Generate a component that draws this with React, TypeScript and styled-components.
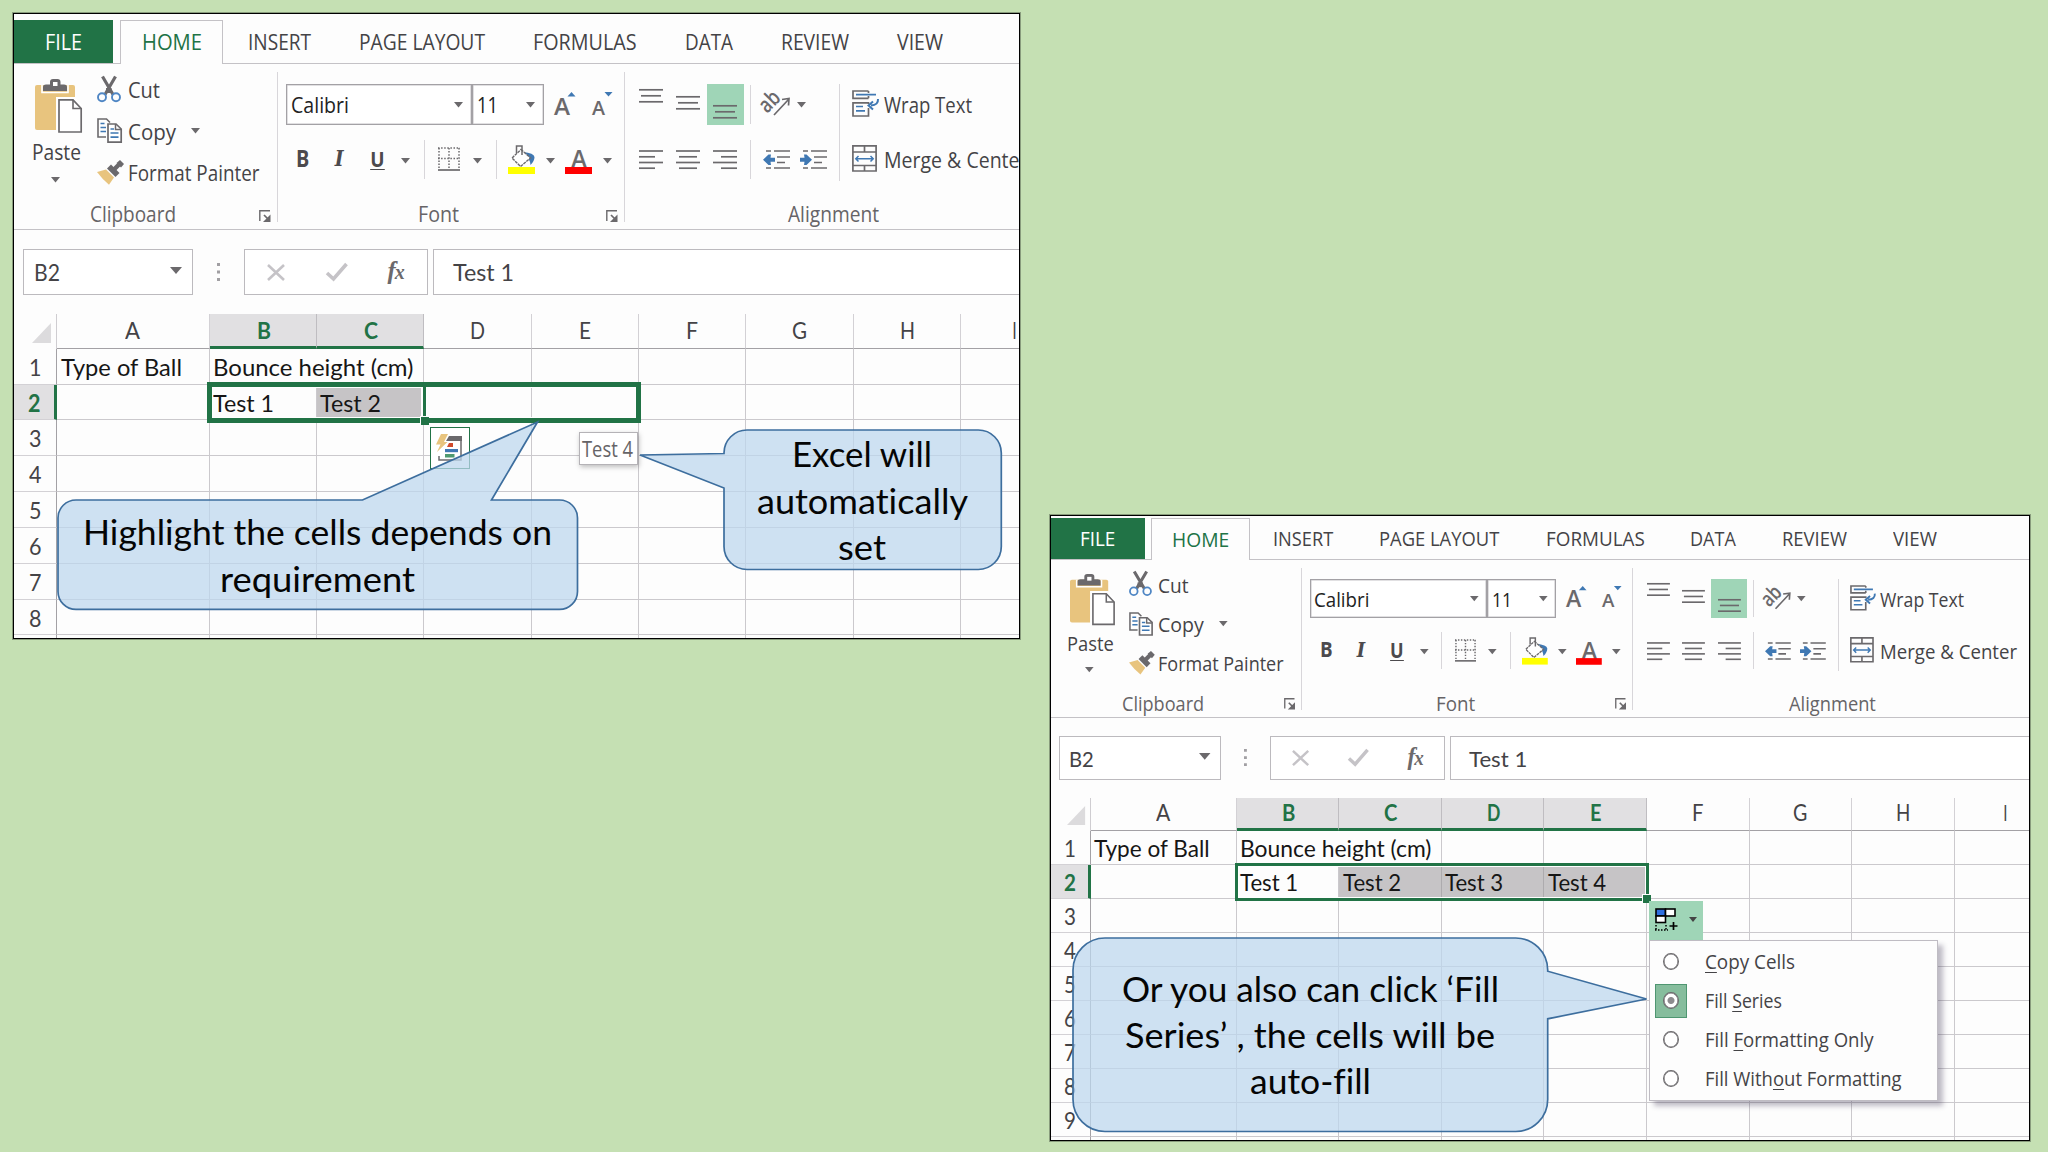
import React, { useLayoutEffect, useRef } from "react";
import styled, { createGlobalStyle, css, ThemeProvider, useTheme } from "styled-components";

/* ---------- scale helpers: each workbook window has its own zoom ---------- */
type Zoom = { sx: number; sy: number };
const x = (n: number) => (p: any) => `${n * p.theme.sx}px`;
const y = (n: number) => (p: any) => `${n * p.theme.sy}px`;

const UI = `"Open Sans", "Noto Sans", sans-serif`;
const BODY = `Lato, "Open Sans", sans-serif`;
const GREEN = "#217346";
const INK = "#444346";
const ICON = "#6b696c";
const BLUE = "#3f78b3";

const Global = createGlobalStyle`
  body { margin: 0; background: #c5e0b3; }
  * { box-sizing: border-box; }
`;

const Slide = styled.main`
  position: relative;
  width: 2048px;
  height: 1152px;
  overflow: hidden;
  background: #c5e0b3;
`;

/* ---------- text condensed to a given width ---------- */
const FitBox = styled.span<{ $w: number; $size: number; $font: string; $color: string; $bold?: boolean }>`
  display: block;
  flex: none;
  white-space: pre;
  line-height: 1.3;
  font-variant-ligatures: none;
  width: ${(p) => p.$w * (p.theme as Zoom).sx}px;
  font-size: ${(p) => p.$size * (p.theme as Zoom).sy}px;
  font-family: ${(p) => p.$font};
  font-weight: ${(p) => (p.$bold ? 700 : 400)};
  color: ${(p) => p.$color};
`;
const FitInner = styled.span`
  display: inline-block;
  transform-origin: 0 50%;
`;

type FitProps = {
  w: number;
  size?: number;
  font?: string;
  color?: string;
  bold?: boolean;
  dy?: number;
  children: React.ReactNode;
};
function Fit({ w, size = 21.8, font = UI, color = INK, bold, dy = 1, children }: FitProps) {
  const ref = useRef<HTMLSpanElement>(null);
  const zoom = useTheme() as unknown as Zoom;
  useLayoutEffect(() => {
    const el = ref.current!;
    el.style.transform = "none";
    const natural = el.getBoundingClientRect().width;
    el.style.transform = `translateY(${dy}px) scaleX(${(w * zoom.sx) / natural})`;
  });
  return (
    <FitBox $w={w} $size={size} $font={font} $color={color} $bold={bold}>
      <FitInner ref={ref}>{children}</FitInner>
    </FitBox>
  );
}

/* ---------- icons ---------- */
const Svg = styled.svg<{ $w: number; $h: number }>`
  display: block;
  flex: none;
  overflow: visible;
  width: ${(p) => p.$w * (p.theme as Zoom).sx}px;
  height: ${(p) => p.$h * (p.theme as Zoom).sy}px;
`;
function Icon({ w, h, children }: { w: number; h: number; children: React.ReactNode }) {
  return (
    <Svg $w={w} $h={h} viewBox={`0 0 ${w} ${h}`} preserveAspectRatio="none" fill="none">
      {children}
    </Svg>
  );
}
const Caret = ({ w = 9, h = 5.5, color = ICON }: { w?: number; h?: number; color?: string }) => (
  <Icon w={w} h={h}>
    <path d={`M0 0H${w}L${w / 2} ${h}Z`} fill={color} />
  </Icon>
);
const PasteIcon = () => (
  <Icon w={47} h={54}>
    <rect x="0" y="6" width="40" height="45" rx="2" fill="#e8c47e" />
    <path d="M7 6V13.500H33V6" stroke="#fff" strokeWidth="1.600" />
    <path d="M8 12V8Q8 5.500 11 5.500H15V3Q15 0 18 0H22.500Q25.500 0 25.500 3V5.500H29Q32 5.500 32 8V12Z" fill={ICON} />
    <rect x="18" y="3" width="4.500" height="4" fill="#fff" />
    <path d="M21 18H40L48 27V54H21Z" fill="#fff" />
    <path d="M24 20.800H38L46.200 29.500V53H24Z" fill="#fff" stroke={ICON} strokeWidth="1.700" />
    <path d="M38 20.800V29.500H46.200" stroke={ICON} strokeWidth="1.600" />
  </Icon>
);
const CutIcon = () => (
  <Icon w={24} h={27}>
    <path d="M5.500 .5L16 18.500M18.500 .5L8 18.500" stroke={ICON} strokeWidth="3.200" />
    <path d="M9 12H14.500V17H9Z" fill={ICON} />
    <circle cx="5" cy="21.300" r="4" stroke="#4f86c4" strokeWidth="1.900" fill="#fdfdfd" />
    <circle cx="19" cy="21.300" r="4" stroke="#4f86c4" strokeWidth="1.900" fill="#fdfdfd" />
  </Icon>
);
const CopyIcon = () => (
  <Icon w={25} h={25}>
    <path d="M9 19H1V1H9.500L13 4.500" stroke={ICON} strokeWidth="1.600" />
    <path d="M3.500 5.500H7.500M3.500 9.500H9M3.500 13.500H9" stroke={BLUE} strokeWidth="1.600" />
    <path d="M11 6H19L24.200 11V24.200H11Z" fill="#fff" stroke={ICON} strokeWidth="1.700" />
    <path d="M18.500 6V11.500H24" stroke={ICON} strokeWidth="1.500" />
    <path d="M13.500 11H17M13.500 15H21.500M13.500 19.200H21.500" stroke={BLUE} strokeWidth="1.700" />
  </Icon>
);
const PainterIcon = () => (
  <Icon w={27} h={25}>
    <path d="M0 12L9 9.500L17 17.500L12 24.800Q6 20 0 12Z" fill="#e8c47e" />
    <path d="M10 8.500L14 4.500L22.500 13L18.500 17Z" fill={ICON} />
    <path d="M16.500 10L22 4.500" stroke={ICON} strokeWidth="4.500" />
    <path d="M19.500 3L23 0L27 4L24 7.500Z" fill={ICON} />
  </Icon>
);
const LauncherIcon = () => (
  <Icon w={12} h={12}>
    <path d="M.8 11V.8H11" stroke={ICON} strokeWidth="1.400" />
    <path d="M5 5L10 10" stroke={ICON} strokeWidth="1.700" />
    <path d="M11.500 4.500V12H4Z" fill={ICON} />
  </Icon>
);
const BordersIcon = () => (
  <Icon w={22} h={24}>
    <path d="M0 1H22M0 11.500H22" stroke={ICON} strokeWidth="1.500" strokeDasharray="1.500 1.600" />
    <path d="M1 1V22M11 1V22M21 1V22" stroke={ICON} strokeWidth="1.500" strokeDasharray="1.500 1.600" />
    <path d="M0 23H22" stroke={ICON} strokeWidth="1.700" />
  </Icon>
);
const FillIcon = () => (
  <Icon w={27} h={29}>
    <path d="M15 7Q26 8 26.500 12Q26.500 16 22.500 20Q22 13 15 7Z" fill={BLUE} />
    <path d="M13 4.500L22.500 13L12.500 21.500L4 13Z" fill="#fff" stroke={ICON} strokeWidth="1.400" strokeDasharray="3 .8" />
    <path d="M8.500 8V1H14V10" stroke={ICON} strokeWidth="1.500" />
    <rect x="0" y="22" width="27" height="7" fill="#ff0" />
  </Icon>
);
const AlignIcon = ({ lines, h }: { lines: [number, number, number][]; h: number }) => (
  <Icon w={24} h={h}>
    {lines.map(([a, b, top], i) => (
      <path key={i} d={`M${a} ${top}H${b}`} stroke={ICON} strokeWidth="1.700" />
    ))}
  </Icon>
);
const VALIGN: [number, number, number][] = [[0, 24, 0.8], [2, 22, 6.8], [0, 24, 12.8]];
const OrientIcon = () => (
  <Icon w={27} h={27}>
    <g transform="rotate(-45 9 12)">
      <text x="-3" y="17" fontSize="22" fontFamily="Open Sans" fontWeight="600" fill={ICON} textLength="21" lengthAdjust="spacingAndGlyphs">
        ab
      </text>
    </g>
    <path d="M11 25L25.500 9.500M19 9.500L26 8.500L25.500 15.500" stroke={ICON} strokeWidth="1.700" />
  </Icon>
);
const IndentIcon = ({ right }: { right?: boolean }) => (
  <Icon w={27} h={19}>
    <path d="M3 1H8M11 1H27M14 7H27M14 12.500H22M3 18H8M11 18H27" stroke={ICON} strokeWidth="1.600" />
    {right ? (
      <path d="M0 7.700H4.500L4 4.500H6.500L12 9.700L6.500 15H4L4.500 11.700H0Z" fill={BLUE} />
    ) : (
      <path d="M12 7.700H7.500L8 4.500H5.500L0 9.700L5.500 15H8L7.500 11.700H12Z" fill={BLUE} />
    )}
  </Icon>
);
const WrapIcon = () => (
  <Icon w={27} h={27}>
    <path d="M16.500 8.300H1V1H16.500M16.500 8.300V6M16.500 1V3M16.500 14V12.800H1V26H16.500V18" stroke={ICON} strokeWidth="1.700" />
    <path d="M4 4.600H24M4 16.500H11M4 20.800H13" stroke={BLUE} strokeWidth="1.700" />
    <path d="M26 9Q26.500 15 19 15.500M21 11.500L16.500 15.500L21 19.500" stroke={BLUE} strokeWidth="2" />
  </Icon>
);
const MergeIcon = () => (
  <Icon w={25} h={27}>
    <path d="M.9 .9H24.100V26H.9ZM.9 7H24.100M.9 20.500H24.100M12.500 1V7M12.500 20.500V26" stroke={ICON} strokeWidth="1.700" />
    <path d="M4 13.700H21M6.500 11L3.800 13.700L6.500 16.500M18.500 11L21.200 13.700L18.500 16.500" stroke={BLUE} strokeWidth="1.500" />
  </Icon>
);
const QuickIcon = () => (
  <Icon w={26} h={27}>
    <path d="M13 2H26V7H10Z" fill={ICON} />
    <path d="M25 6V26H3V22" stroke={ICON} strokeWidth="1.500" />
    <path d="M5 0H12L8 8H11.500L1 18L4.500 10.500H0Z" fill="#e8c47e" />
    <path d="M11 13L13 9H17V13Z" fill="#d0492c" />
    <rect x="9" y="15" width="13" height="3.200" fill={BLUE} />
    <rect x="9" y="20" width="9.500" height="3.500" fill="#4f9a70" />
  </Icon>
);
const AutoFillIcon = () => (
  <Icon w={23} h={24}>
    <rect x="1" y="1" width="9.500" height="7" fill="#2f6fe0" stroke="#000" strokeWidth="1.600" />
    <rect x="10.500" y="1" width="9.500" height="7" fill="#fff" stroke="#000" strokeWidth="1.600" />
    <rect x="1" y="8" width="9.500" height="6.500" fill="#fff" stroke="#000" strokeWidth="1.600" />
    <path d="M0 22H13M1 17V22M11 17V22" stroke="#000" strokeWidth="1.500" strokeDasharray="1.500 1.500" />
    <path d="M14.500 18H22.500M18.500 14V22" stroke="#000" strokeWidth="1.700" />
  </Icon>
);

/* ---------- window frame ---------- */
const Window = styled.section<{ $left: number; $top: number; $w: number; $h: number }>`
  position: absolute;
  left: ${(p) => p.$left}px;
  top: ${(p) => p.$top}px;
  width: ${(p) => p.$w}px;
  height: ${(p) => p.$h}px;
  border: 1px solid #000;
  box-shadow: 0 0 0 1px rgba(0, 0, 0, 0.3);
  background: #fdfdfd;
  overflow: hidden;
`;
const Content = styled.div<{ $up?: number; $back?: number }>`
  display: flex;
  flex-direction: column;
  width: ${x(1060)};
  margin-top: ${(p) => -(p.$up ?? 0)}px;
  margin-left: ${(p) => -(p.$back ?? 0)}px;
`;

/* ---------- tabs ---------- */
const TabBar = styled.nav`
  display: flex;
  align-items: stretch;
  height: ${y(50)};
  padding-top: ${y(6)};
  border-bottom: 1px solid #c4c2c6;
`;
const FileTab = styled.div`
  display: flex;
  align-items: center;
  justify-content: center;
  width: ${x(99)};
  margin-right: ${x(7)};
  background: ${GREEN};
`;
const Tab = styled.div<{ $active?: boolean }>`
  display: flex;
  align-items: center;
  justify-content: center;
  padding: 0 ${x(24)};
  ${(p) =>
    p.$active &&
    css`
      width: ${x(103)};
      padding: 0;
      margin-right: 1px;
      margin-bottom: -1px;
      background: #fdfdfd;
      border: 1px solid #c4c2c6;
      border-bottom: 0;
    `}
`;
const TABS: [string, number][] = [
  ["INSERT", 63],
  ["PAGE LAYOUT", 126],
  ["FORMULAS", 103.5],
  ["DATA", 48],
  ["REVIEW", 68],
  ["VIEW", 46],
];

/* ---------- ribbon ---------- */
const Ribbon = styled.div`
  display: flex;
  height: ${y(166)};
  border-bottom: 1px solid #c4c2c6;
`;
const Group = styled.div<{ $w: number }>`
  display: flex;
  flex-direction: column;
  position: relative;
  width: ${(p) => p.$w * (p.theme as Zoom).sx}px;
  flex: none;
  &:not(:last-child)::after {
    content: "";
    position: absolute;
    right: 0;
    top: ${y(8)};
    height: ${y(150)};
    width: 1px;
    background: #d8d6da;
  }
`;
const GroupBody = styled.div<{ $left: number; $top: number }>`
  display: flex;
  height: ${y(135)};
  padding-left: ${(p) => p.$left * (p.theme as Zoom).sx}px;
  padding-top: ${(p) => p.$top * (p.theme as Zoom).sy}px;
`;
const GroupFooter = styled.div<{ $left: number }>`
  display: flex;
  align-items: center;
  justify-content: space-between;
  height: ${y(29)};
  padding: 0 ${x(7)} 0 ${(p) => p.$left * (p.theme as Zoom).sx}px;
`;
const Column = styled.div`
  display: flex;
  flex-direction: column;
  flex: none;
`;
const PasteButton = styled(Column)`
  align-items: center;
  width: ${x(60)};
  margin-right: ${x(10.5)};
  padding-top: ${y(9.5)};
  & > svg:first-child {
    margin-left: ${x(5)};
  }
  & > svg:last-child {
    margin-right: ${x(2)};
  }
`;
const Push = styled.span<{ $h: number }>`
  height: ${(p) => p.$h * (p.theme as Zoom).sy}px;
`;
const CommandRow = styled.div<{ $h: number }>`
  display: flex;
  align-items: center;
  height: ${(p) => p.$h * (p.theme as Zoom).sy}px;
`;
const Tool = styled.span<{ $w: number; $h?: number; $on?: boolean; $lift?: number; $start?: boolean }>`
  display: flex;
  align-items: center;
  justify-content: ${(p) => (p.$start ? "flex-start" : "center")};
  flex: none;
  width: ${(p) => p.$w * (p.theme as Zoom).sx}px;
  height: ${(p) => (p.$h ?? 41) * (p.theme as Zoom).sy}px;
  padding-bottom: ${(p) => Math.max(0, p.$lift ?? 0) * 2 * (p.theme as Zoom).sy}px;
  padding-top: ${(p) => Math.max(0, -(p.$lift ?? 0)) * 2 * (p.theme as Zoom).sy}px;
  background: ${(p) => (p.$on ? "#9fd5b7" : "none")};
`;
const Rule = styled.span<{ $w: number; $h: number }>`
  flex: none;
  width: ${(p) => p.$w * (p.theme as Zoom).sx}px;
  height: ${(p) => p.$h * (p.theme as Zoom).sy}px;
  background: linear-gradient(#d8d6da, #d8d6da) center / 1px 100% no-repeat;
`;
const Combo = styled.span<{ $w: number }>`
  display: flex;
  align-items: center;
  justify-content: space-between;
  flex: none;
  height: ${y(41)};
  width: ${(p) => p.$w * (p.theme as Zoom).sx}px;
  padding: 0 ${x(8)} 0 ${x(3.5)};
  border: 1px solid #a3a1a5;
  box-shadow: inset 0 0 0 0.5px #c4c2c6;
  background: #fff;
`;
const Letter = styled.span<{ $size: number; $italic?: boolean; $under?: boolean }>`
  font-family: ${(p) => (p.$italic ? `"DejaVu Serif", serif` : UI)};
  font-size: ${(p) => p.$size * (p.theme as Zoom).sy}px;
  font-weight: 700;
  font-style: ${(p) => (p.$italic ? "italic" : "normal")};
  line-height: 1.05;
  color: #4c4a4d;
  transform: scaleX(0.86);
  ${(p) => p.$under && css`border-bottom: 1.5px solid #4c4a4d; line-height: 0.98;`}
`;
const SizeIcon = ({ up }: { up?: boolean }) => (
  <Icon w={22} h={24}>
    <text x="0" y="22.500" fontSize={up ? 24 : 19} fontFamily="Open Sans" fontWeight="600" fill={ICON} textLength={up ? 16 : 13} lengthAdjust="spacingAndGlyphs">
      A
    </text>
    {up ? <path d="M13.500 4.500L17.500 0L21.500 4.500Z" fill={BLUE} /> : <path d="M12.500 0H20.500L16.500 4.500Z" fill={BLUE} />}
  </Icon>
);
const FontColorIcon = () => (
  <Icon w={27} h={25}>
    <text x="6" y="18.500" fontSize="25" fontFamily="Open Sans" fontWeight="600" fill={ICON} textLength="16" lengthAdjust="spacingAndGlyphs">
      A
    </text>
    <rect x="0" y="18" width="27" height="7" fill="#f00" />
  </Icon>
);

function RibbonBar() {
  return (
    <Ribbon>
      <Group $w={264}>
        <GroupBody $left={12} $top={5}>
          <PasteButton>
            <PasteIcon />
            <Push $h={4} />
            <Fit w={49}>Paste</Fit>
            <Push $h={12} />
            <Caret w={9} />
          </PasteButton>
          <Column>
            <CommandRow $h={41.3}>
              <Tool $w={31} $start $lift={0.5}><CutIcon /></Tool>
              <Fit w={32}>Cut</Fit>
            </CommandRow>
            <CommandRow $h={41.3}>
              <Tool $w={31} $start><CopyIcon /></Tool>
              <Fit w={48}>Copy</Fit>
              <Tool $w={40}><Caret /></Tool>
            </CommandRow>
            <CommandRow $h={41.3}>
              <Tool $w={31} $start><PainterIcon /></Tool>
              <Fit w={131.5}>Format Painter</Fit>
            </CommandRow>
          </Column>
        </GroupBody>
        <GroupFooter $left={75.5}>
          <Fit w={86} color="#666467">Clipboard</Fit>
          <Tool $w={12} $lift={-2}><LauncherIcon /></Tool>
        </GroupFooter>
      </Group>

      <Group $w={347}>
        <GroupBody $left={7} $top={20}>
          <Column>
            <CommandRow $h={41}>
              <Tool $w={1} />
              <Combo $w={186}>
                <Fit w={58} color="#222">Calibri</Fit>
                <Caret />
              </Combo>
              <Combo $w={72}>
                <Fit w={21} color="#222">11</Fit>
                <Caret />
              </Combo>
              <Tool $w={42} $lift={1}><SizeIcon up /></Tool>
              <Tool $w={34} $lift={1}><SizeIcon /></Tool>
            </CommandRow>
            <Push $h={14} />
            <CommandRow $h={41}>
              <Tool $w={36} $lift={1}><Letter $size={23}>B</Letter></Tool>
              <Tool $w={37} $lift={1}><Letter $size={22} $italic>I</Letter></Tool>
              <Tool $w={38} $lift={0.5}><Letter $size={22} $under>U</Letter></Tool>
              <Tool $w={19} $lift={-1}><Caret /></Tool>
              <Rule $w={18} $h={39} />
              <Tool $w={32} $lift={1}><BordersIcon /></Tool>
              <Tool $w={25} $lift={-1}><Caret /></Tool>
              <Rule $w={12} $h={39} />
              <Tool $w={39}><FillIcon /></Tool>
              <Tool $w={18} $lift={-1}><Caret /></Tool>
              <Tool $w={39} $lift={-2}><FontColorIcon /></Tool>
              <Tool $w={18} $lift={-1}><Caret /></Tool>
            </CommandRow>
          </Column>
        </GroupBody>
        <GroupFooter $left={140}>
          <Fit w={41} color="#666467">Font</Fit>
          <Tool $w={12} $start $lift={-2}><LauncherIcon /></Tool>
        </GroupFooter>
      </Group>

      <Group $w={415}>
        <GroupBody $left={7.5} $top={20}>
          <Column>
            <CommandRow $h={41}>
              <Tool $w={37} $lift={9}><AlignIcon h={14} lines={VALIGN} /></Tool>
              <Tool $w={37} $lift={2}><AlignIcon h={14} lines={VALIGN} /></Tool>
              <Tool $w={37} $on $lift={-7}><AlignIcon h={14} lines={VALIGN} /></Tool>
              <Rule $w={14} $h={39} />
              <Tool $w={37} $lift={1}><OrientIcon /></Tool>
              <Tool $w={13}><Caret /></Tool>
            </CommandRow>
            <Push $h={14} />
            <CommandRow $h={41}>
              <Tool $w={37}><AlignIcon h={19} lines={[[0, 24, 1], [0, 16, 6.8], [0, 24, 12.5], [0, 16, 18.2]]} /></Tool>
              <Tool $w={37}><AlignIcon h={19} lines={[[0, 24, 1], [3, 21, 6.8], [0, 24, 12.5], [3, 21, 18.2]]} /></Tool>
              <Tool $w={37}><AlignIcon h={19} lines={[[0, 24, 1], [8, 24, 6.8], [0, 24, 12.5], [8, 24, 18.2]]} /></Tool>
              <Rule $w={14} $h={39} />
              <Tool $w={37}><IndentIcon /></Tool>
              <Tool $w={37}><IndentIcon right /></Tool>
            </CommandRow>
          </Column>
          <Rule $w={16} $h={97} />
          <Column>
            <CommandRow $h={41}>
              <Tool $w={4} />
              <Tool $w={32} $start $lift={1}><WrapIcon /></Tool>
              <Fit w={88}>Wrap Text</Fit>
            </CommandRow>
            <Push $h={14} />
            <CommandRow $h={41}>
              <Tool $w={4} />
              <Tool $w={32} $start $lift={1}><MergeIcon /></Tool>
              <Fit w={143.5}>Merge &amp; Center</Fit>
            </CommandRow>
          </Column>
        </GroupBody>
        <GroupFooter $left={162.5}>
          <Fit w={91} color="#666467">Alignment</Fit>
        </GroupFooter>
      </Group>
    </Ribbon>
  );
}

/* ---------- formula bar ---------- */
const FormulaBar = styled.div`
  display: flex;
  align-items: center;
  height: ${y(46)};
  margin: ${y(19)} 0 ${y(19)} ${x(9)};
`;
const Field = styled.div<{ $w?: number }>`
  display: flex;
  align-items: center;
  height: 100%;
  border: 1px solid #bcbabe;
  background: #fff;
  ${(p) => (p.$w ? css`width: ${x(p.$w)};` : css`flex: 1;`)}
`;
const NameField = styled(Field)`
  justify-content: space-between;
  padding: 0 ${x(10)} 0 ${x(10)};
`;
const ValueField = styled(Field)`
  margin-left: ${x(5)};
  padding-left: ${x(19)};
`;
const FxLabel = styled.span`
  font: italic 700 ${y(26)} / 1 "Liberation Serif", serif;
  color: #6b696c;
  transform: scaleX(0.95);
  small {
    font-size: ${y(21)};
    margin-left: -1px;
  }
`;

/* ---------- sheet ---------- */
const Sheet = styled.div`
  position: relative;
  display: flex;
  flex-direction: column;
`;
const HeaderRow = styled.div`
  display: flex;
  height: ${y(34.8)};
`;
const Corner = styled.div`
  display: flex;
  align-items: flex-end;
  justify-content: flex-end;
  flex: none;
  width: ${x(43)};
  padding: 0 ${x(5)} ${y(6)} 0;
  border-right: 1px solid #cfcdd1;
`;
const ColHead = styled.div<{ $w: number; $sel?: boolean }>`
  display: flex;
  align-items: center;
  justify-content: center;
  flex: none;
  width: ${(p) => p.$w * (p.theme as Zoom).sx}px;
  padding-bottom: ${y(2)};
  border-right: 1px solid #d3d1d5;
  border-bottom: 1px solid #a3a1a5;
  ${(p) =>
    p.$sel &&
    css`
      padding-bottom: 0;
      padding-left: 2px;
      background: #e1e0e2;
      border-right-color: #bfbdc1;
      border-bottom: 3px solid ${GREEN};
    `}
`;
const Row = styled.div`
  display: flex;
  height: ${y(35.83)};
`;
const RowHead = styled.div<{ $sel?: boolean }>`
  display: flex;
  align-items: center;
  justify-content: center;
  flex: none;
  width: ${x(43)};
  border-right: 1px solid #a3a1a5;
  border-bottom: 1px solid #d3d1d5;
  ${(p) =>
    p.$sel &&
    css`
      padding-left: 1px;
      background: #e1e0e2;
      border-right: 3px solid ${GREEN};
    `}
`;
const Cell = styled.div<{ $w: number; $open?: boolean; $shade?: boolean }>`
  display: flex;
  align-items: center;
  flex: none;
  width: ${(p) => p.$w * (p.theme as Zoom).sx}px;
  padding-left: ${x(3.5)};
  border-right: 1px solid ${(p) => (p.$open ? "transparent" : "#cbc9cd")};
  border-bottom: 1px solid #cbc9cd;
  background: ${(p) => (p.$shade ? "#c6c4c6" : "none")};
  ${(p) => p.$shade && css`border-right-color: #adabae;`}
`;
const SelectionBox = styled.div<{ $cols: number; $thick: number }>`
  position: absolute;
  left: ${x(193.3)};
  top: ${y(68.3)};
  width: ${(p) => (p.$cols * 107.4 + 4) * (p.theme as Zoom).sx}px;
  height: ${y(40.5)};
  border: ${(p) => p.$thick}px solid ${GREEN};
  box-shadow: inset 0 0 0 1px #fff;
`;
const RangeEdge = styled.div`
  position: absolute;
  left: 407px;
  top: 73px;
  width: 6px;
  height: 31px;
  background: ${GREEN};
  border-left: 2px solid #fff;
  border-right: 1px solid #fff;
`;
const Handle = styled.div<{ $col: number }>`
  position: absolute;
  left: ${(p) => (195.3 + p.$col * 107.4 - 4.5) * (p.theme as Zoom).sx}px;
  top: ${y(101.5)};
  width: 9px;
  height: 9px;
  background: ${GREEN};
  border-top: 1px solid #fff;
  border-left: 1px solid #fff;
`;

const COLS = ["A", "B", "C", "D", "E", "F", "G", "H", "I"];
const colW = (c: string) => (c === "A" ? 152.5 : 107.4);
const CELL_W: Record<string, number> = { "Type of Ball": 121, "Bounce height (cm)": 200.5 };
const INK_CELL = "#161616";

type BookProps = { selected: string[]; rows: number; tests: string[]; thick: number; tabDy: number };
function Workbook({ selected, rows, tests, thick, tabDy }: BookProps) {
  const values: Record<string, string> = { A1: "Type of Ball", B1: "Bounce height (cm)" };
  tests.forEach((t, i) => (values[COLS[i + 1] + "2"] = t));
  return (
    <>
      <TabBar>
        <FileTab><Fit w={37} color="#fff" dy={tabDy}>FILE</Fit></FileTab>
        <Tab $active><Fit w={60} color={GREEN} dy={0}>HOME</Fit></Tab>
        {TABS.map(([t, w]) => (
          <Tab key={t}><Fit w={w} dy={tabDy}>{t}</Fit></Tab>
        ))}
      </TabBar>
      <RibbonBar />
      <FormulaBar>
        <NameField $w={170}>
          <Fit w={26} font={BODY} size={23}>B2</Fit>
          <Tool $w={12} $lift={2}><Caret w={12} h={7} /></Tool>
        </NameField>
        <Tool $w={51}>
          <Icon w={3} h={18}>
            <path d="M0 0H3V3H0ZM0 7.500H3V10.500H0ZM0 15H3V18H0Z" fill="#a19fa3" />
          </Icon>
        </Tool>
        <Field $w={184}>
          <Tool $w={62}>
            <Icon w={18} h={17}>
              <path d="M1 1L17 16M17 1L1 16" stroke="#c5c3c7" strokeWidth="2.600" />
            </Icon>
          </Tool>
          <Tool $w={58}>
            <Icon w={21} h={18}>
              <path d="M1 10L7.500 16L20.500 1" stroke="#c5c3c7" strokeWidth="3.600" />
            </Icon>
          </Tool>
          <Tool $w={63} $lift={1}><FxLabel>f<small>x</small></FxLabel></Tool>
        </Field>
        <ValueField>
          <Fit w={61} font={BODY} size={23}>Test 1</Fit>
        </ValueField>
      </FormulaBar>
      <Sheet>
        <HeaderRow>
          <Corner>
            <Icon w={19} h={20}><path d="M19 0V20H0Z" fill="#dcdbdd" /></Icon>
          </Corner>
          {COLS.map((c) => {
            const sel = selected.includes(c);
            return (
              <ColHead key={c} $w={colW(c)} $sel={sel}>
                <Fit
                  w={c === "I" ? 5 : sel ? (c === "E" ? 12 : 14) : c === "E" || c === "F" ? 12 : 15}
                  font={c === "I" ? UI : BODY}
                  size={23.5}
                  bold={sel}
                  dy={0}
                  color={sel ? GREEN : INK}
                >
                  {c}
                </Fit>
              </ColHead>
            );
          })}
        </HeaderRow>
        {Array.from({ length: rows + 1 }, (_, i) => i + 1).map((r) => (
          <Row key={r}>
            <RowHead $sel={r === 2}>
              {r <= rows && (
                <Fit w={12.5} font={BODY} size={23.8} bold={r === 2} color={r === 2 ? GREEN : INK}>{r}</Fit>
              )}
            </RowHead>
            {COLS.map((c) => {
              const v = values[c + r];
              return (
                <Cell key={c} $w={colW(c)} $open={r === 1 && c === "B"} $shade={r === 2 && !!v && c !== "B"}>
                  {v && <Fit w={CELL_W[v] ?? 61} font={BODY} size={23.8} color={INK_CELL}>{v}</Fit>}
                </Cell>
              );
            })}
          </Row>
        ))}
        <SelectionBox $cols={4} $thick={thick} />
        {tests.length === 2 && <RangeEdge />}
        <Handle $col={tests.length} />
      </Sheet>
    </>
  );
}

/* ---------- floating pieces ---------- */
const QuickButton = styled.div`
  position: absolute;
  left: 430px;
  top: 427px;
  width: 40px;
  height: 42px;
  display: flex;
  align-items: center;
  justify-content: center;
  padding-right: 2px;
  padding-bottom: 2px;
  border: 1px solid ${GREEN};
  background: #fff;
`;
const DragTip = styled.div`
  position: absolute;
  left: 579px;
  top: 432px;
  width: 59px;
  height: 33px;
  display: flex;
  align-items: center;
  justify-content: center;
  padding-right: 2px;
  background: #fff;
  border: 1px solid #b5b3b7;
  box-shadow: 1px 2px 5px rgba(0, 0, 0, 0.25);
`;
const FillButton = styled.div`
  position: absolute;
  left: 1649px;
  top: 901px;
  width: 54px;
  height: 40px;
  padding: 0 6px 3px;
  display: flex;
  align-items: center;
  justify-content: space-between;
  background: #9fd5b7;
`;
const Menu = styled.ul`
  position: absolute;
  left: 1649px;
  top: 940px;
  width: 289px;
  height: 161px;
  margin: 0;
  padding: 1px 0 0 5px;
  list-style: none;
  background: #fdfdfd;
  border: 1px solid #bfbcc3;
  box-shadow: 5px 5px 5px rgba(60, 50, 80, 0.32);
`;
const MenuItem = styled.li`
  display: flex;
  align-items: center;
  height: 39px;
  gap: 17.5px;
`;
const RadioBox = styled.span<{ $on?: boolean }>`
  display: flex;
  align-items: center;
  justify-content: center;
  width: 32px;
  height: 34px;
  border: 1px solid ${(p) => (p.$on ? "#4f9671" : "transparent")};
  background: ${(p) => (p.$on ? "#86bd9d" : "none")};
`;
const Dot = styled.span<{ $on?: boolean }>`
  width: 16px;
  height: 17px;
  border-radius: 50%;
  border: 1px solid #6b696c;
  box-shadow: inset 0 0 0 0.6px #6b696c;
  background: ${(p) => (p.$on ? "radial-gradient(circle, #8d8b8e 0 3px, #fff 4px)" : "#fff")};
`;
const Key = styled.span`
  text-decoration: underline;
  text-decoration-thickness: 1px;
  text-underline-offset: 3px;
`;

const CalloutBox = styled.div<{ $l: number; $t: number; $w: number; $h: number }>`
  position: absolute;
  left: ${(p) => p.$l}px;
  top: ${(p) => p.$t}px;
  width: ${(p) => p.$w}px;
  height: ${(p) => p.$h}px;
`;
const CalloutShape = styled.svg`
  position: absolute;
  inset: 0;
  width: 100%;
  height: 100%;
  overflow: visible;
`;
const CalloutText = styled.div`
  position: relative;
  display: flex;
  flex-direction: column;
  align-items: center;
  justify-content: center;
  height: 100%;
`;
const Line = styled.div`
  display: flex;
  align-items: center;
  height: 46.3px;
`;
type CalloutProps = {
  l: number; t: number; w: number; h: number; r: number;
  side: "top" | "left" | "right";
  base: [number, number];
  tip: [number, number];
  lines: [string, number][];
};
function Callout({ l, t, w, h, r, side, base, tip, lines }: CalloutProps) {
  const [a, b] = base;
  const tail = `L${tip[0]} ${tip[1]}`;
  const d = [
    `M${r} 0`,
    side === "top" ? `H${a}${tail}L${b} 0` : "",
    `H${w - r}A${r} ${r} 0 0 1 ${w} ${r}`,
    side === "right" ? `V${a}${tail}L${w} ${b}` : "",
    `V${h - r}A${r} ${r} 0 0 1 ${w - r} ${h}H${r}A${r} ${r} 0 0 1 0 ${h - r}`,
    side === "left" ? `V${b}${tail}L0 ${a}` : "",
    `V${r}A${r} ${r} 0 0 1 ${r} 0Z`,
  ].join("");
  return (
    <CalloutBox $l={l} $t={t} $w={w} $h={h}>
      <CalloutShape>
        <path d={d} fill="rgba(189,215,238,0.74)" stroke="#3d6e9e" strokeWidth="1.700" />
      </CalloutShape>
      <CalloutText>
        {lines.map(([text, width]) => (
          <Line key={text}><Fit w={width} size={34.4} font={BODY} color="#050505">{text}</Fit></Line>
        ))}
      </CalloutText>
    </CalloutBox>
  );
}

const MENU: [string, string, string, number][] = [
  ["", "C", "opy Cells", 90],
  ["Fill ", "S", "eries", 77],
  ["Fill ", "F", "ormatting Only", 168.5],
  ["Fill With", "o", "ut Formatting", 196.5],
];

export default function App() {
  return (
    <ThemeProvider theme={{ sx: 1, sy: 1 }}>
      <Global />
      <Slide>
        <Window $left={13} $top={13} $w={1007} $h={626}>
          <Content>
            <Workbook selected={["B", "C"]} rows={8} tests={["Test 1", "Test 2"]} thick={5} tabDy={1} />
          </Content>
        </Window>
        <ThemeProvider theme={{ sx: 0.955, sy: 0.951 }}>
          <Window $left={1050} $top={515} $w={980} $h={626}>
            <Content $up={3.5} $back={1}>
              <Workbook selected={["B", "C", "D", "E"]} rows={9} tests={["Test 1", "Test 2", "Test 3", "Test 4"]} thick={3} tabDy={0} />
            </Content>
          </Window>
        </ThemeProvider>

        <QuickButton><QuickIcon /></QuickButton>
        <DragTip><Fit w={51} size={21} color="#666467">Test 4</Fit></DragTip>

        <Callout
          l={57.5} t={500.3} w={519.5} h={109.4} r={18} side="top" base={[304.5, 433.5]} tip={[479.5, -78]}
          lines={[["Highlight the cells depends on", 469], ["requirement", 195]]}
        />
        <Callout
          l={723.5} t={430.3} w={277.3} h={139.5} r={23} side="left" base={[23.5, 58]} tip={[-84, 25]}
          lines={[["Excel will", 140], ["automatically", 211], ["set", 48]]}
        />
        <Callout
          l={1073} t={937.5} w={474.7} h={193.5} r={32} side="right" base={[33.2, 80.8]} tip={[573.5, 61]}
          lines={[["Or you also can click ‘Fill", 377], ["Series’ , the cells will be", 370], ["auto-fill", 121]]}
        />

        <FillButton>
          <AutoFillIcon />
          <Caret w={8} h={5} color="#444" />
        </FillButton>
        <Menu>
          {MENU.map(([pre, key, post, w], i) => (
            <MenuItem key={w}>
              <RadioBox $on={i === 1}><Dot $on={i === 1} /></RadioBox>
              <Fit w={w} size={20.5} dy={0}>{pre}<Key>{key}</Key>{post}</Fit>
            </MenuItem>
          ))}
        </Menu>
      </Slide>
    </ThemeProvider>
  );
}
